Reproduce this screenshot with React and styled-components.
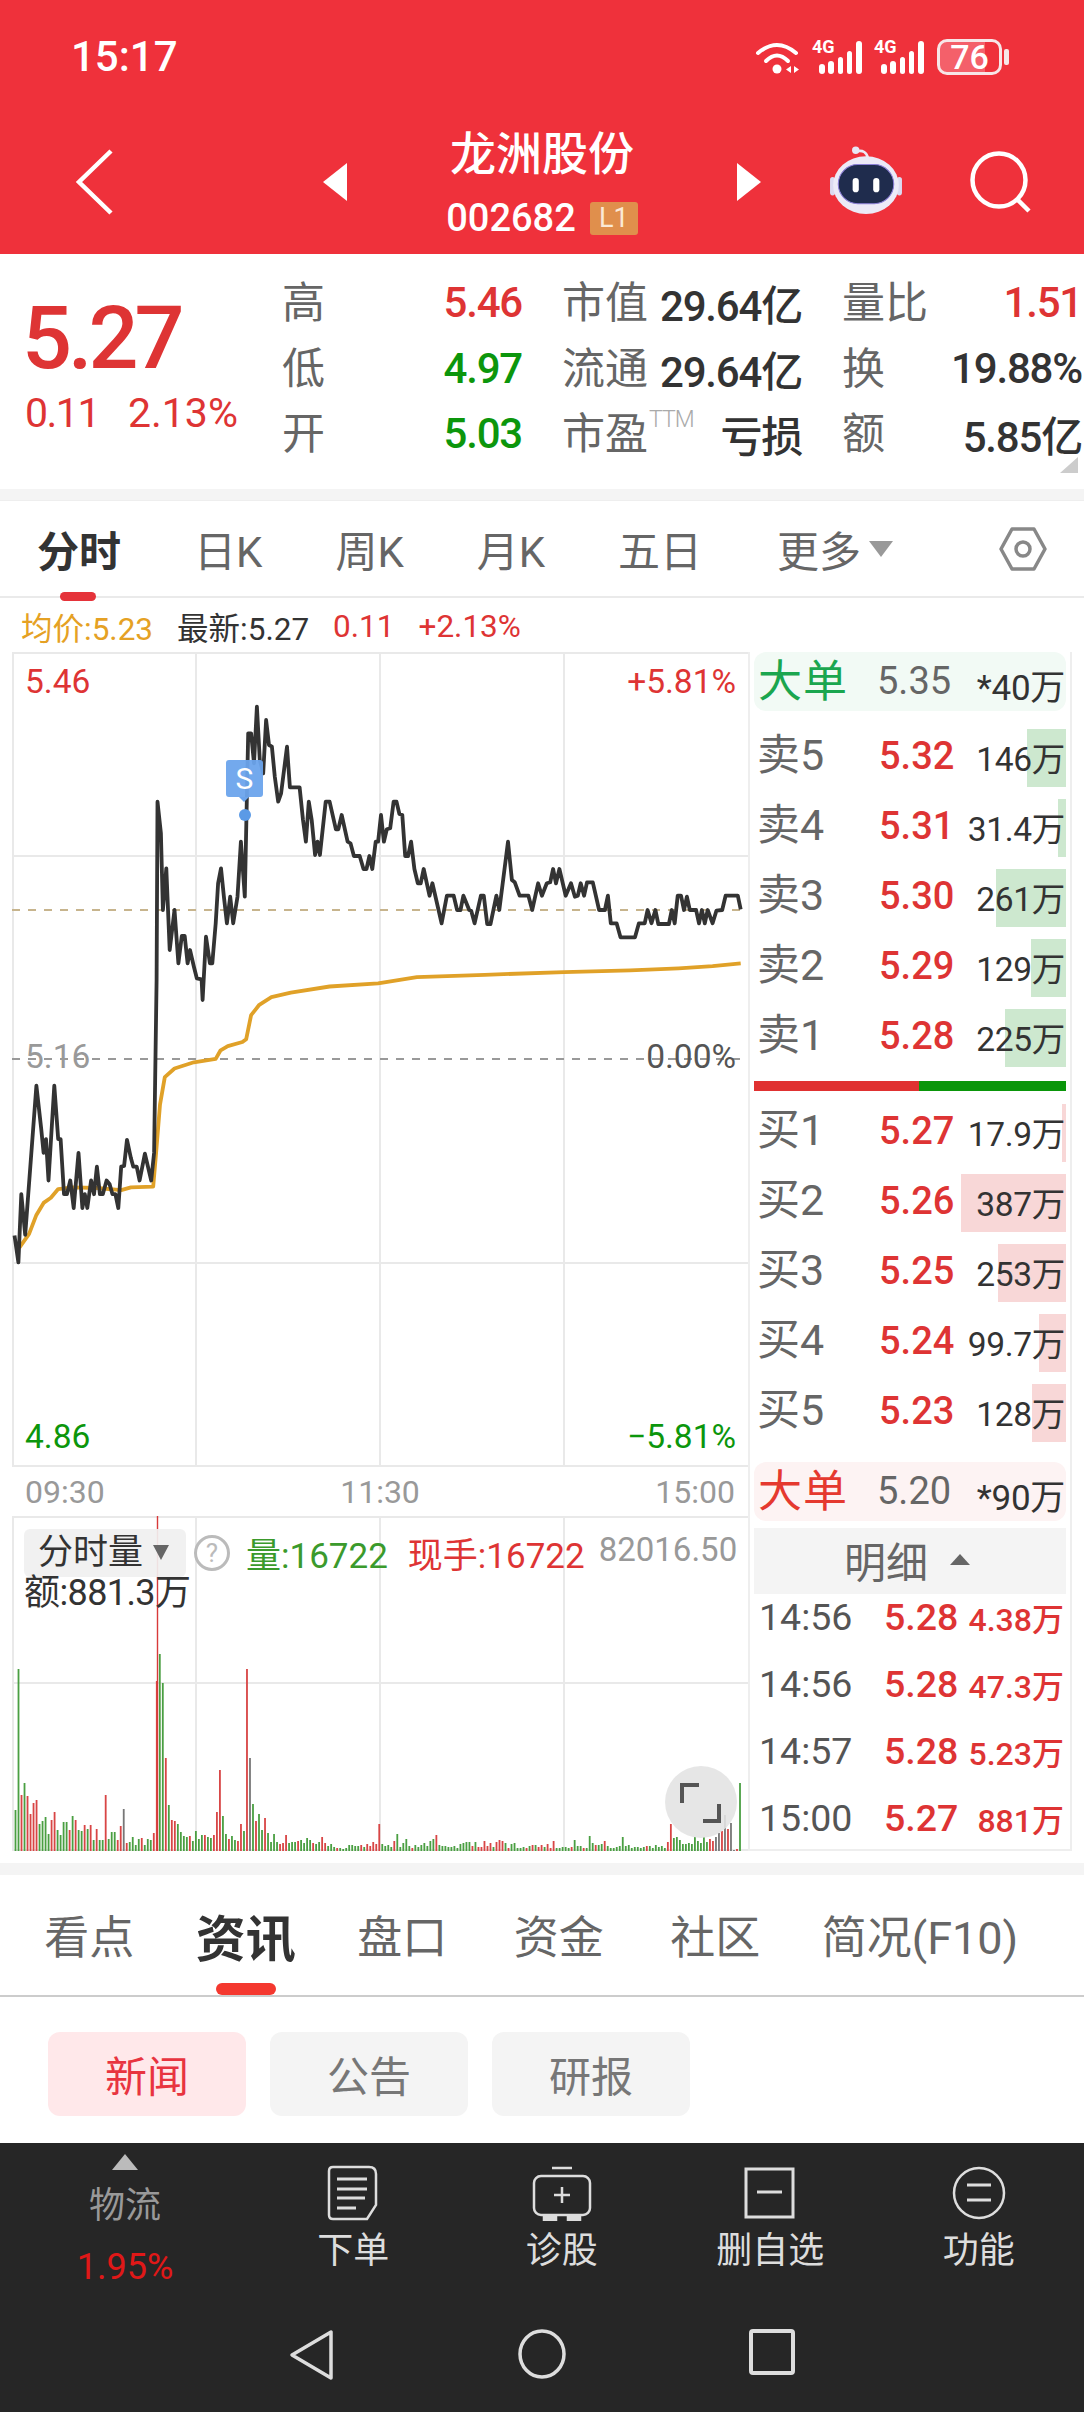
import styled, { createGlobalStyle } from "styled-components";

const RED = "#de3434";
const GREEN = "#0c960c";

const GlobalStyle = createGlobalStyle`
	html, body { margin: 0; padding: 0; background: #fff; }
	* { box-sizing: border-box; }
	body { font-family: Roboto, "Noto Sans CJK SC", sans-serif; color: #333; }
`;

// points read off the chart: price line, average line (chart zoom coordinates)
const PRICE_A = [[30,800],[38,878],[44,680],[52,798],[75,365],[85,490],[90,560],[95,520],[100,640],[112,365],[120,520],[125,520],[132,680],[138,680],[145,640],[152,720],[162,560],[170,720],[175,680],[180,720],[188,640],[194,680],[200,600],[206,680],[212,680],[220,640],[226,650],[232,680],[238,680],[244,720],[250,600],[256,598],[262,522],[270,575],[275,600],[282,600],[288,640],[299,562],[312,640],[318,560]];
const PRICE_B = [[323,1440],[325,905],[332,1000],[336,1230],[343,1105],[350,1350],[360,1230],[368,1390],[375,1308],[381,1308],[387,1390],[392,1350],[400,1400],[406,1435],[416,1438],[418,1500],[425,1310],[433,1390],[438,1390],[445,1270],[450,1150],[456,1105],[462,1190],[468,1270],[475,1190],[481,1270],[490,1190],[497,1025],[505,1190],[512,700],[518,700],[524,790],[530,620],[536,780],[543,820],[549,660],[555,735],[561,740],[567,830],[574,905],[580,880],[592,740],[598,862],[618,862],[625,960],[631,1025],[637,905],[643,960],[650,1065],[655,1025],[660,1065],[672,905],[680,905],[693,988],[698,988],[705,945],[717,1025],[723,1030],[730,1068],[742,1068],[750,1107],[756,1107],[762,1068],[768,1107],[775,1025],[780,1025],[786,945],[792,1025],[798,988],[805,985],[812,905],[818,905],[824,942],[830,945],[836,1068],[842,1068],[848,1025],[855,1107],[862,1150],[868,1150],[874,1107],[886,1187],[892,1150],[911,1270],[922,1187],[936,1187],[943,1230],[950,1230],[956,1187],[968,1230],[972,1232],[979,1270],[992,1187],[998,1187],[1005,1272],[1012,1272],[1024,1187],[1030,1230],[1048,1025],[1056,1140],[1062,1147],[1072,1187],[1090,1187],[1098,1230],[1110,1150],[1118,1187],[1128,1150],[1135,1147],[1141,1107],[1147,1150],[1154,1107],[1167,1187],[1178,1150],[1186,1190],[1192,1187],[1198,1150],[1205,1187],[1211,1147],[1223,1147],[1236,1230],[1248,1230],[1254,1187],[1260,1270],[1272,1270],[1280,1312],[1310,1312],[1318,1270],[1330,1270],[1336,1230],[1344,1270],[1352,1230],[1358,1272],[1380,1272],[1386,1230],[1392,1270],[1398,1187],[1405,1187],[1411,1230],[1417,1190],[1423,1230],[1436,1230],[1442,1270],[1448,1230],[1454,1270],[1460,1230],[1470,1270],[1478,1232],[1490,1230],[1497,1187],[1522,1187],[1528,1228]];
const AVG = [[40,835],[60,795],[75,740],[90,705],[105,690],[120,665],[150,660],[200,662],[250,668],[270,660],[316,658],[322,560],[330,420],[340,340],[360,315],[400,297],[445,287],[455,262],[470,250],[500,238],[508,230],[518,160],[535,130],[560,108],[600,95],[680,77],[780,68],[860,50],[1000,43],[1164,35],[1300,30],[1400,24],[1470,18],[1528,10]];

const fromLower = ([x, y]) => [x / 2.063 - 12, 960 + y / 2.903 - 652];
const fromUpper = ([x, y]) => [x / 2.063 - 12, 500 + y / 3 - 652];
const toPoints = (list) => list.map((p) => p.map((n) => n.toFixed(1)).join(",")).join(" ");
const pricePoints = toPoints([...PRICE_A.map(fromLower), ...PRICE_B.map(fromUpper)]);
const avgPoints = toPoints(AVG.map(fromLower));

// volume bars: positive red, negative green
const VOLUME = [-41,-182,56,-68,55,37,48,51,-27,-30,-34,-17,31,39,-21,-16,-29,-29,21,-35,31,-21,-20,26,-22,26,-11,22,-11,-11,56,-12,-19,-19,11,25,42,8,-9,-14,-6,-12,13,-6,-12,-11,18,170,-197,-168,93,-46,31,30,-27,-19,-15,-14,15,-10,-20,-12,-16,16,-14,-13,16,39,81,-35,-17,12,-15,-11,10,27,-20,182,93,-47,30,-37,-21,33,-18,-9,-17,-9,7,8,16,-8,-9,-9,10,-11,-8,-13,-11,8,-7,-9,14,8,-5,-7,-4,3,-3,-2,-3,-6,-6,-5,-5,6,-4,7,5,9,7,27,-7,-5,-6,-4,10,-17,-4,-8,-12,-5,3,-6,-4,-6,-8,-5,-10,-12,16,-6,-5,-5,-4,-4,-5,-3,-7,-8,-9,-9,5,-9,4,4,10,5,8,-4,9,11,10,-8,3,-7,-8,-3,-3,-4,3,-5,6,-6,4,6,-4,7,3,10,-3,-3,-4,-4,-3,4,-11,-5,-5,3,-3,-15,-8,6,-6,-7,10,-5,-3,-3,-4,-5,-14,-5,-6,-3,-4,-4,-3,-4,5,-5,-3,-6,-4,-5,-3,9,27,-13,-14,-11,-7,-7,-8,-7,-14,-10,-8,-14,-9,12,10,14,18,20,36,22,28,-1,2,-68];
const GRAY_BARS = new Set([36, 78, VOLUME.length - 9, VOLUME.length - 8, VOLUME.length - 6, VOLUME.length - 4, VOLUME.length - 3]);

const SELLS = [
	{ label: "卖5", price: "5.32", qty: "146", w: 39 },
	{ label: "卖4", price: "5.31", qty: "31.4", w: 8 },
	{ label: "卖3", price: "5.30", qty: "261", w: 70 },
	{ label: "卖2", price: "5.29", qty: "129", w: 35 },
	{ label: "卖1", price: "5.28", qty: "225", w: 61 },
];
const BUYS = [
	{ label: "买1", price: "5.27", qty: "17.9", w: 4 },
	{ label: "买2", price: "5.26", qty: "387", w: 105 },
	{ label: "买3", price: "5.25", qty: "253", w: 68 },
	{ label: "买4", price: "5.24", qty: "99.7", w: 27 },
	{ label: "买5", price: "5.23", qty: "128", w: 34 },
];
const DETAILS = [
	["14:56", "5.28", "4.38万"],
	["14:56", "5.28", "47.3万"],
	["14:57", "5.28", "5.23万"],
	["15:00", "5.27", "881万"],
];

const Page = styled.div`
	width: 1084px;
	height: 2412px;
	overflow: hidden;
	background: #fff;
`;

const Header = styled.header`
	height: 254px;
	background: #ef313b;
	color: #fff;
`;
const StatusBar = styled.div`
	height: 100px;
	padding: 14px 82px 0 71px;
	display: flex;
	justify-content: space-between;
	align-items: center;
`;
const Clock = styled.span`
	font-size: 42px;
	line-height: 44px;
	font-weight: 500;
`;
const StatusIcons = styled.div`
	display: flex;
	align-items: center;
	gap: 12px;
`;
const SignalWrap = styled.div`
	position: relative;
	width: 50px;
	height: 34px;
	svg {
		display: block;
	}
`;
const NetworkTag = styled.span`
	position: absolute;
	left: 0;
	top: -2px;
	font-size: 18px;
	line-height: 18px;
	font-weight: 700;
`;
const Battery = styled.div`
	position: relative;
	width: 65px;
	height: 36px;
	margin-left: 1px;
	border: 3px solid #f7e6e7;
	border-radius: 10px;
	background: linear-gradient(90deg, #f4606a 76%, transparent 76%);
	display: flex;
	align-items: center;
	justify-content: center;
	font-size: 34px;
	font-weight: 500;
	&::after {
		content: "";
		position: absolute;
		right: -10px;
		top: 7px;
		width: 5px;
		height: 16px;
		border-radius: 2px;
		background: #f7e6e7;
	}
`;
const NavRow = styled.div`
	padding-top: 29px;
	display: grid;
	grid-template-columns: 323px 24px 390px 24px 209px 1fr;
	align-items: center;
`;
const BackCell = styled.div`
	padding-left: 75px;
	display: flex;
`;
const TitleBlock = styled.div`
	display: flex;
	flex-direction: column;
	align-items: center;
`;
const Title = styled.div`
	font-size: 46px;
	line-height: 50px;
	font-weight: 500;
`;
const CodeLine = styled.div`
	margin-top: 22px;
	height: 34px;
	display: flex;
	align-items: center;
	gap: 14px;
	font-size: 38px;
	font-weight: 500;
`;
const Badge = styled.span`
	width: 48px;
	height: 33px;
	border-radius: 3px;
	background: #e08f4c;
	color: #fbe9d6;
	font-size: 27px;
	font-weight: 400;
	display: flex;
	align-items: center;
	justify-content: center;
`;
const RobotCell = styled.div`
	padding-bottom: 4px;
	display: flex;
	justify-content: center;
`;

const Stats = styled.section`
	position: relative;
	height: 235px;
	display: flex;
	&::after {
		content: "";
		position: absolute;
		right: 6px;
		bottom: 16px;
		border-bottom: 16px solid #ccc;
		border-left: 18px solid transparent;
	}
`;
const PriceBlock = styled.div`
	width: 282px;
	flex: none;
	padding: 44px 0 0 22px;
	color: ${RED};
`;
const BigPrice = styled.div`
	font-size: 88px;
	line-height: 80px;
	font-weight: 500;
	letter-spacing: -4px;
`;
const PriceChange = styled.div`
	margin-top: 15px;
	padding-left: 3px;
	line-height: 40px;
	display: flex;
	gap: 29px;
	font-size: 41px;
`;
const ChangeValue = styled.span`
	letter-spacing: ${(p) => (p.$tight ? "-1.5px" : "0")};
`;
const StatGrid = styled.div`
	padding-top: 15px;
	display: grid;
	grid-template-columns: repeat(3, 240px);
	grid-auto-rows: 65.5px;
	column-gap: 40px;
`;
const StatCell = styled.div`
	display: flex;
	justify-content: space-between;
	align-items: center;
`;
const StatLabel = styled.span`
	margin-top: -5px;
	font-size: 43px;
	color: #666;
	display: flex;
`;
const Ttm = styled.sup`
	font-size: 23px;
	line-height: 23px;
	font-weight: 300;
	letter-spacing: -1px;
	color: #aaa;
	margin: 9px 0 0 1px;
`;
const StatValue = styled.span`
	margin-top: 2px;
	font-size: 42px;
	font-weight: 500;
	letter-spacing: -1.2px;
	color: ${(p) => p.$color || "#333"};
`;
const Band = styled.div`
	height: ${(p) => p.$h}px;
	background: #f4f4f4;
`;

const TabBar = styled.nav`
	height: 98px;
	padding: 0 36px 0 37px;
	border-top: 1px solid #eee;
	border-bottom: 2px solid #eaeaea;
	display: flex;
	align-items: center;
	gap: 73px;
`;
const Tab = styled.span`
	position: relative;
	font-size: 42px;
	font-weight: ${(p) => (p.$active ? 700 : 400)};
	color: ${(p) => (p.$active ? "#333" : "#666")};
	${(p) =>
		p.$active &&
		`&::after {
			content: "";
			position: absolute;
			left: 23px;
			bottom: -22px;
			width: 36px;
			height: 9px;
			border-radius: 5px;
			background: #e5333a;
		}`}
`;
const MoreTab = styled(Tab)`
	margin-left: 2px;
	display: flex;
	align-items: center;
	gap: 8px;
	&::after {
		content: "";
		position: static;
		border-top: 16px solid #999;
		border-left: 12px solid transparent;
		border-right: 12px solid transparent;
	}
`;
const HexIcon = styled.svg`
	margin-left: auto;
	flex: none;
`;

const Legend = styled.div`
	height: 54px;
	padding: 2px 0 0 21px;
	display: flex;
	align-items: center;
	gap: 24px;
	font-size: 31.5px;
`;
const LegendItem = styled.span`
	color: ${(p) => p.$color};
`;

const Main = styled.section`
	padding: 0 0 12px 12px;
	display: grid;
	grid-template-columns: 736px 324px;
`;
const LeftColumn = styled.div`
	display: flex;
	flex-direction: column;
`;
const ChartBox = styled.div`
	position: relative;
	width: 736px;
	height: ${(p) => p.$h}px;
	svg {
		display: block;
	}
`;
const ChartLabel = styled.span`
	position: absolute;
	top: ${(p) => p.$top}px;
	${(p) => (p.$right ? "right: 12px;" : "left: 13px;")}
	font-size: 33.5px;
	line-height: 32px;
	color: ${(p) => p.$color};
`;
const SignalTag = styled.div`
	position: absolute;
	left: 214px;
	top: 108px;
	width: 37px;
	height: 37px;
	border-radius: 3px;
	background: rgba(107, 164, 236, 0.95);
	color: #fff;
	font-size: 30px;
	display: flex;
	align-items: center;
	justify-content: center;
	&::after {
		content: "";
		position: absolute;
		left: 13px;
		bottom: -5px;
		border-top: 5px solid #6ba4ec;
		border-left: 5px solid transparent;
		border-right: 5px solid transparent;
	}
`;
const SignalDot = styled.div`
	position: absolute;
	left: 227px;
	top: 157px;
	width: 12px;
	height: 12px;
	border-radius: 50%;
	background: #5b9ae6;
`;
const TimeAxis = styled.div`
	height: 49px;
	padding: 0 13px;
	display: flex;
	justify-content: space-between;
	align-items: center;
	font-size: 32px;
	color: #999;
`;
const VolumeHead = styled.div`
	position: absolute;
	left: 12px;
	top: 11px;
	display: flex;
	align-items: center;
`;
const VolumeMode = styled.div`
	width: 162px;
	height: 48px;
	padding-left: 14px;
	border-radius: 6px;
	background: rgba(240, 240, 240, 0.92);
	display: flex;
	align-items: center;
	gap: 10px;
	font-size: 35px;
	line-height: 40px;
	&::after {
		content: "";
		border-top: 15px solid #666;
		border-left: 8px solid transparent;
		border-right: 8px solid transparent;
	}
`;
const HelpMark = styled.span`
	width: 36px;
	height: 36px;
	margin-left: 8px;
	border: 3px solid #bbb;
	border-radius: 50%;
	color: #bbb;
	font-size: 26px;
	display: flex;
	align-items: center;
	justify-content: center;
`;
const VolumeStat = styled.span`
	margin-left: ${(p) => p.$gap}px;
	font-size: 35px;
	color: ${(p) => p.$color};
`;
const VolumeMax = styled.span`
	margin: -6px 0 0 14px;
	font-size: 33px;
	color: #999;
`;
const AmountLine = styled.div`
	position: absolute;
	left: 12px;
	top: 60px;
	font-size: 36px;
	line-height: 34px;
	letter-spacing: -0.6px;
	color: #333;
`;
const FullscreenButton = styled.div`
	position: absolute;
	right: 11px;
	bottom: 13px;
	width: 72px;
	height: 72px;
	border-radius: 50%;
	background: rgba(226, 226, 226, 0.88);
	display: flex;
`;

const SidePanel = styled.aside`
	height: 1199px;
	padding: 0 4px;
	border: 2px solid #eee;
	border-top: none;
	display: flex;
	flex-direction: column;
`;
const BigOrder = styled.div`
	height: 59px;
	flex: none;
	margin-top: ${(p) => p.$mt}px;
	padding: 0 1px 15px 4px;
	border-radius: 12px;
	background: ${(p) => p.$bg};
	display: grid;
	grid-template-columns: 119px 1fr auto;
	align-items: center;
`;
const BigLabel = styled.span`
	margin-top: -6px;
	font-size: 44px;
	letter-spacing: 1px;
	color: ${(p) => p.$color};
`;
const GrayPrice = styled.span`
	font-size: 38px;
	color: #666;
`;
const Qty = styled.span`
	position: relative;
	font-size: 33.5px;
	letter-spacing: -0.3px;
	color: #333;
	text-align: right;
`;
const BigQty = styled(Qty)`
	margin-top: 6px;
	font-size: 35px;
`;
const DepthList = styled.div`
	margin-top: ${(p) => p.$mt}px;
	display: flex;
	flex-direction: column;
	gap: 12px;
`;
const DepthRow = styled.div`
	position: relative;
	height: 58px;
	padding: 0 1px 4px 3px;
	display: grid;
	grid-template-columns: 122px 1fr auto;
	align-items: center;
`;
const DepthBar = styled.div`
	position: absolute;
	top: 0;
	right: 0;
	bottom: 0;
	width: ${(p) => p.$w}px;
	background: ${(p) => p.$bg};
`;
const DepthLabel = styled.span`
	margin-top: -10px;
	font-size: 43px;
	color: #666;
`;
const RedPrice = styled.span`
	position: relative;
	font-size: 38px;
	font-weight: 500;
	color: ${RED};
`;
const SplitBar = styled.div`
	height: 10px;
	flex: none;
	margin-top: 14px;
	background: linear-gradient(90deg, #e03131 52.8%, #0a960a 52.8%);
`;
const DetailHead = styled.div`
	height: 66px;
	flex: none;
	margin-top: 7px;
	padding: 0 6px 4px 0;
	background: #f4f4f4;
	color: #666;
	font-size: 42px;
	display: flex;
	align-items: center;
	justify-content: center;
	gap: 22px;
	&::after {
		content: "";
		border-bottom: 11px solid #666;
		border-left: 10px solid transparent;
		border-right: 10px solid transparent;
	}
`;
const DetailList = styled.div`
	padding: 0 2px 0 5px;
	display: flex;
	flex-direction: column;
	gap: 27px;
`;
const DetailRow = styled.div`
	height: 40px;
	display: grid;
	grid-template-columns: 125px 1fr auto;
	align-items: center;
	font-size: 37.5px;
	color: #555;
`;
const DetailPrice = styled.span`
	font-weight: 500;
	color: ${RED};
`;
const DetailQty = styled.span`
	font-size: 32px;
	font-weight: 500;
	color: ${RED};
`;

const InfoTabs = styled.nav`
	height: 122px;
	padding: 0 0 3px 11px;
	border-bottom: 2px solid #ccc;
	display: grid;
	grid-template-columns: repeat(5, 156.5px) 253px;
	align-items: center;
`;
const InfoTab = styled.span`
	position: relative;
	text-align: center;
	padding-top: 2px;
	font-size: ${(p) => (p.$active ? 50 : 45)}px;
	font-weight: ${(p) => (p.$active ? 700 : 400)};
	color: ${(p) => (p.$active ? "#333" : "#666")};
	${(p) =>
		p.$active &&
		`&::after {
			content: "";
			position: absolute;
			left: 50%;
			margin-left: -30px;
			bottom: -24px;
			width: 60px;
			height: 12px;
			border-radius: 6px;
			background: #f4382f;
		}`}
`;
const SubTabs = styled.div`
	height: 146px;
	padding: 35px 0 0 48px;
	display: flex;
	gap: 24px;
`;
const SubTab = styled.span`
	width: 198px;
	height: 84px;
	padding-bottom: 2px;
	border-radius: 12px;
	background: ${(p) => (p.$active ? "#ffe8ea" : "#f4f4f4")};
	color: ${(p) => (p.$active ? "#e8343f" : "#777")};
	font-size: 42px;
	display: flex;
	align-items: center;
	justify-content: center;
`;

const BottomArea = styled.div`
	height: 269px;
	background: #262626;
`;
const Toolbar = styled.div`
	height: 170px;
	padding-left: 21px;
	display: grid;
	grid-template-columns: 228px repeat(4, 208.5px);
`;
const TickerCell = styled.div`
	width: 208px;
	padding-top: 11px;
	display: flex;
	flex-direction: column;
	align-items: center;
	&::before {
		content: "";
		border-bottom: 16px solid #bbb;
		border-left: 13px solid transparent;
		border-right: 13px solid transparent;
	}
`;
const TickerName = styled.span`
	margin-top: 16px;
	font-size: 36px;
	line-height: 40px;
	color: #999;
`;
const TickerPct = styled.span`
	margin-top: 21px;
	font-size: 36px;
	line-height: 40px;
	color: #e01818;
`;
const ToolItem = styled.div`
	padding-top: 22px;
	display: flex;
	flex-direction: column;
	align-items: center;
	gap: 9px;
	font-size: 36px;
	line-height: 42px;
	color: #ddd;
`;
const SystemNav = styled.div`
	padding-top: 16px;
	display: grid;
	grid-template-columns: repeat(3, 230px);
	justify-content: center;
	justify-items: center;
`;

const SignalIcon = () => (
	<SignalWrap>
		<NetworkTag>4G</NetworkTag>
		<svg width="50" height="34" viewBox="0 0 50 34">
			<g fill="#fff">
				<rect x="7" y="24" width="6" height="10" rx="3" />
				<rect x="16" y="21" width="6" height="13" rx="3" />
				<rect x="26" y="17" width="5" height="17" rx="2.5" />
				<rect x="35" y="11" width="5" height="23" rx="2.5" />
				<rect x="44" y="1" width="6" height="33" rx="3" />
			</g>
		</svg>
	</SignalWrap>
);

const ToolIcon = ({ children }) => (
	<svg width="64" height="56" viewBox="0 0 64 56" fill="none" stroke="#ddd" strokeWidth="2.5">
		{children}
	</svg>
);

const App = () => {
	const n = VOLUME.length;
	return (
		<Page>
			<GlobalStyle />
			<Header>
				<StatusBar>
					<Clock>15:17</Clock>
					<StatusIcons>
						<svg width="45" height="34" viewBox="0 0 45 34" fill="none" stroke="#fff" strokeWidth="4" strokeLinecap="round">
							<path d="M3 13Q22 -3 41 13" />
							<path d="M11 21Q22 10 33 21" />
							<circle cx="22" cy="29" r="4.5" fill="#fff" stroke="none" />
							<path d="M36 26l-5 3.5 5 3.5zM39 26l5 3.5-5 3.5z" fill="#fff" stroke="none" />
						</svg>
						<SignalIcon />
						<SignalIcon />
						<Battery>76</Battery>
					</StatusIcons>
				</StatusBar>
				<NavRow>
					<BackCell>
						<svg width="38" height="66" viewBox="0 0 38 66" fill="none" stroke="#fff" strokeWidth="4.5">
							<path d="M36 2L4 33l32 31" />
						</svg>
					</BackCell>
					<svg width="24" height="38" viewBox="0 0 24 38">
						<path d="M24 0V38L0 19z" fill="#fff" />
					</svg>
					<TitleBlock>
						<Title>龙洲股份</Title>
						<CodeLine>
							002682
							<Badge>L1</Badge>
						</CodeLine>
					</TitleBlock>
					<svg width="24" height="38" viewBox="0 0 24 38">
						<path d="M0 0V38L24 19z" fill="#fff" />
					</svg>
					<RobotCell>
						<svg width="74" height="68" viewBox="0 0 72 66">
							<path d="M27 5Q36 3 38 12" fill="none" stroke="#eceaf6" strokeWidth="2.5" />
							<circle cx="26" cy="4" r="3.6" fill="#e8e6f4" />
							<rect x="1" y="30" width="5" height="18" rx="2.5" fill="#dcdaf0" />
							<rect x="66" y="30" width="5" height="18" rx="2.5" fill="#dcdaf0" />
							<ellipse cx="36" cy="38" rx="32" ry="28" fill="#eceaf7" />
							<rect x="9" y="18" width="54" height="38" rx="19" fill="#1f2c4d" stroke="#8b7fd6" strokeWidth="1" />
							<rect x="23" y="31" width="6" height="14" rx="3" fill="#fff" />
							<rect x="43" y="31" width="6" height="14" rx="3" fill="#fff" />
						</svg>
					</RobotCell>
					<svg width="62" height="62" viewBox="0 0 62 62" fill="none" stroke="#fff" strokeWidth="4.5">
						<circle cx="29" cy="29" r="26.5" />
						<path d="M47 48l12 12" />
					</svg>
				</NavRow>
			</Header>

			<Stats>
				<PriceBlock>
					<BigPrice>5.27</BigPrice>
					<PriceChange>
						<ChangeValue $tight>0.11</ChangeValue>
						<ChangeValue>2.13%</ChangeValue>
					</PriceChange>
				</PriceBlock>
				<StatGrid>
					<StatCell><StatLabel>高</StatLabel><StatValue $color={RED}>5.46</StatValue></StatCell>
					<StatCell><StatLabel>市值</StatLabel><StatValue>29.64亿</StatValue></StatCell>
					<StatCell><StatLabel>量比</StatLabel><StatValue $color={RED}>1.51</StatValue></StatCell>
					<StatCell><StatLabel>低</StatLabel><StatValue $color={GREEN}>4.97</StatValue></StatCell>
					<StatCell><StatLabel>流通</StatLabel><StatValue>29.64亿</StatValue></StatCell>
					<StatCell><StatLabel>换</StatLabel><StatValue>19.88%</StatValue></StatCell>
					<StatCell><StatLabel>开</StatLabel><StatValue $color={GREEN}>5.03</StatValue></StatCell>
					<StatCell><StatLabel>市盈<Ttm>TTM</Ttm></StatLabel><StatValue>亏损</StatValue></StatCell>
					<StatCell><StatLabel>额</StatLabel><StatValue>5.85亿</StatValue></StatCell>
				</StatGrid>
			</Stats>
			<Band $h={11} />

			<TabBar>
				<Tab $active>分时</Tab>
				<Tab>日K</Tab>
				<Tab>周K</Tab>
				<Tab>月K</Tab>
				<Tab>五日</Tab>
				<MoreTab>更多</MoreTab>
				<HexIcon width="50" height="46" viewBox="0 0 50 46" fill="none" stroke="#888" strokeWidth="3.5">
					<path d="M14 3H36L47 23 36 43H14L3 23z" strokeLinejoin="round" />
					<circle cx="25" cy="23" r="7" />
				</HexIcon>
			</TabBar>

			<Legend>
				<LegendItem $color="#e5a124">均价:5.23</LegendItem>
				<LegendItem $color="#333">最新:5.27</LegendItem>
				<LegendItem $color={RED}>0.11</LegendItem>
				<LegendItem $color={RED}>+2.13%</LegendItem>
			</Legend>

			<Main>
				<LeftColumn>
					<ChartBox $h={815}>
						<svg width="736" height="815" viewBox="0 0 736 815" fill="none">
							<g stroke="#e9e9e9" strokeWidth="2">
								<path d="M1 0V815M184 0V815M368 0V815M552 0V815" />
								<path d="M0 1H736M0 204H736M0 611H736M0 814H736" />
							</g>
							<path d="M0 407H736" stroke="#999" strokeWidth="2" strokeDasharray="8 8" />
							<path d="M0 258H736" stroke="#c7b48d" strokeWidth="2" strokeDasharray="8 8" />
							<polyline points={avgPoints} stroke="#e0a128" strokeWidth="3.8" strokeLinejoin="round" />
							<polyline points={pricePoints} stroke="#333" strokeWidth="3.8" strokeLinejoin="round" />
						</svg>
						<ChartLabel $top={14} $color={RED}>5.46</ChartLabel>
						<ChartLabel $top={14} $right $color={RED}>+5.81%</ChartLabel>
						<ChartLabel $top={389} $color="#999">5.16</ChartLabel>
						<ChartLabel $top={389} $right $color="#555">0.00%</ChartLabel>
						<ChartLabel $top={769} $color={GREEN}>4.86</ChartLabel>
						<ChartLabel $top={769} $right $color={GREEN}>−5.81%</ChartLabel>
						<SignalTag>S</SignalTag>
						<SignalDot />
					</ChartBox>
					<TimeAxis>
						<span>09:30</span>
						<span>11:30</span>
						<span>15:00</span>
					</TimeAxis>
					<ChartBox $h={335}>
						<svg width="736" height="335" viewBox="0 0 736 335" fill="none">
							<g stroke="#e9e9e9" strokeWidth="2">
								<path d="M1 0V335M184 0V335M368 0V335M552 0V335" />
								<path d="M0 1H736M0 167H736M0 334H736" />
							</g>
							{VOLUME.map((v, i) => {
								const x = 3.5 + (i * 724.5) / (n - 1);
								const h = Math.abs(v);
								const color = GRAY_BARS.has(i) ? "#777" : v > 0 ? "#d84545" : "#4a9f42";
								return <rect key={i} x={x - 0.9} y={335 - h} width="1.8" height={h} fill={color} />;
							})}
							<path d="M145.5 0V335" stroke="#d83a3a" strokeWidth="1.4" />
						</svg>
						<VolumeHead>
							<VolumeMode>分时量</VolumeMode>
							<HelpMark>?</HelpMark>
							<VolumeStat $gap={16} $color="#3b9a2c">量:16722</VolumeStat>
							<VolumeStat $gap={20} $color={RED}>现手:16722</VolumeStat>
							<VolumeMax>82016.50</VolumeMax>
						</VolumeHead>
						<AmountLine>额:881.3万</AmountLine>
						<FullscreenButton>
							<svg width="72" height="72" viewBox="0 0 72 72" fill="none" stroke="#555" strokeWidth="4">
								<path d="M17 37V19H34" />
								<path d="M54 38V55H38" />
							</svg>
						</FullscreenButton>
					</ChartBox>
				</LeftColumn>

				<SidePanel>
					<BigOrder $mt={0} $bg="#f2faf5">
						<BigLabel $color="#1ba64f">大单</BigLabel>
						<GrayPrice>5.35</GrayPrice>
						<BigQty>*40万</BigQty>
					</BigOrder>
					<DepthList $mt={18}>
						{SELLS.map((r) => (
							<DepthRow key={r.label}>
								<DepthBar $w={r.w} $bg="#cde8cf" />
								<DepthLabel>{r.label}</DepthLabel>
								<RedPrice>{r.price}</RedPrice>
								<Qty>{r.qty}万</Qty>
							</DepthRow>
						))}
					</DepthList>
					<SplitBar />
					<DepthList $mt={13}>
						{BUYS.map((r) => (
							<DepthRow key={r.label}>
								<DepthBar $w={r.w} $bg="#f8d7d7" />
								<DepthLabel>{r.label}</DepthLabel>
								<RedPrice>{r.price}</RedPrice>
								<Qty>{r.qty}万</Qty>
							</DepthRow>
						))}
					</DepthList>
					<BigOrder $mt={20} $bg="#fdf3f3">
						<BigLabel $color="#e5392f">大单</BigLabel>
						<GrayPrice>5.20</GrayPrice>
						<BigQty>*90万</BigQty>
					</BigOrder>
					<DetailHead>明细</DetailHead>
					<DetailList>
						{DETAILS.map(([time, price, qty], i) => (
							<DetailRow key={i}>
								<span>{time}</span>
								<DetailPrice>{price}</DetailPrice>
								<DetailQty>{qty}</DetailQty>
							</DetailRow>
						))}
					</DetailList>
				</SidePanel>
			</Main>
			<Band $h={12} />

			<InfoTabs>
				<InfoTab>看点</InfoTab>
				<InfoTab $active>资讯</InfoTab>
				<InfoTab>盘口</InfoTab>
				<InfoTab>资金</InfoTab>
				<InfoTab>社区</InfoTab>
				<InfoTab>简况(F10)</InfoTab>
			</InfoTabs>
			<SubTabs>
				<SubTab $active>新闻</SubTab>
				<SubTab>公告</SubTab>
				<SubTab>研报</SubTab>
			</SubTabs>

			<BottomArea>
				<Toolbar>
					<TickerCell>
						<TickerName>物流</TickerName>
						<TickerPct>1.95%</TickerPct>
					</TickerCell>
					<ToolItem>
						<ToolIcon>
							<path d="M12 2H48Q55 2 55 9V40L46 54H12Q8 54 8 50V6Q8 2 12 2Z" />
							<path d="M16 14H46M16 24H46M16 33H44M16 43H35" strokeWidth="3" />
						</ToolIcon>
						下单
					</ToolItem>
					<ToolItem>
						<ToolIcon>
							<rect x="4" y="11" width="56" height="39" rx="7" />
							<path d="M22 3H42M32 22V38M24 30H40" />
							<path d="M14 50V55H26V50M38 50V55H50V50" fill="#ddd" />
						</ToolIcon>
						诊股
					</ToolItem>
					<ToolItem>
						<ToolIcon>
							<rect x="8" y="4" width="47" height="48" strokeWidth="3" />
							<path d="M19 27H44" strokeWidth="3" />
						</ToolIcon>
						删自选
					</ToolItem>
					<ToolItem>
						<ToolIcon>
							<circle cx="32" cy="28" r="25" />
							<path d="M20 20H44M20 35H44" strokeWidth="3" />
						</ToolIcon>
						功能
					</ToolItem>
				</Toolbar>
				<SystemNav>
					<svg width="46" height="52" viewBox="0 0 46 52" fill="none" stroke="#ddd" strokeWidth="3.5" strokeLinejoin="round">
						<path d="M42 3V49L3 26z" />
					</svg>
					<svg width="48" height="50" viewBox="0 0 48 50" fill="none" stroke="#ddd" strokeWidth="3.5">
						<ellipse cx="24" cy="25" rx="22" ry="23" />
					</svg>
					<svg width="46" height="46" viewBox="0 0 46 46" fill="none" stroke="#ddd" strokeWidth="4">
						<rect x="2" y="2" width="42" height="42" rx="2" />
					</svg>
				</SystemNav>
			</BottomArea>
		</Page>
	);
};

export default App;
